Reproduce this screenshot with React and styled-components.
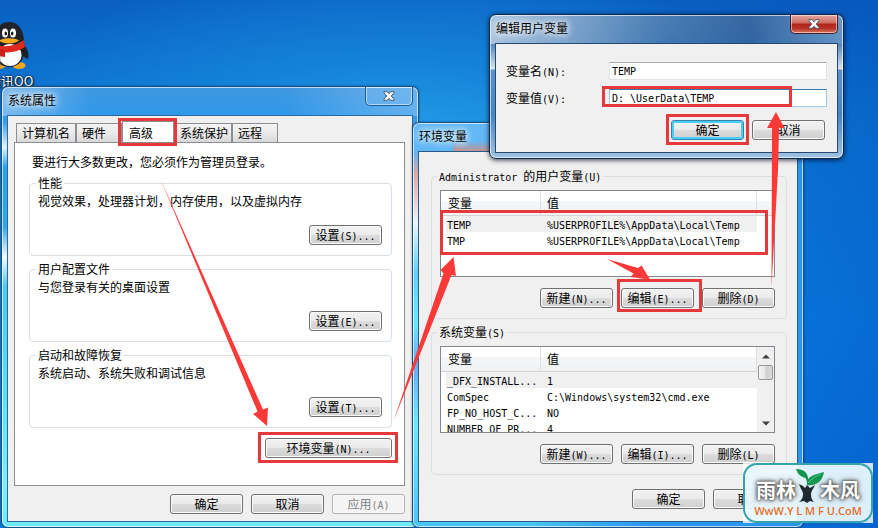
import React, { useState } from "react";
import styled, { createGlobalStyle } from "styled-components";

const GlobalStyle = createGlobalStyle`
  body {
    margin: 0;
    font-family: "Noto Sans CJK SC", sans-serif;
    font-size: 12px;
    line-height: 16px;
    color: #000;
  }
  * {
    box-sizing: border-box;
  }
`

const RED = "#e6393b";

//////////////////////////////desktop
const Desktop = styled.main`
  position: relative;
  min-height: 100vh;
  overflow: hidden;
  background:
    radial-gradient(ellipse 420px 220px at 400px 170px, #2aa4ea 0%, rgba(26, 143, 224, 0.6) 50%, rgba(26, 143, 224, 0) 100%),
    linear-gradient(100deg, rgba(0, 0, 0, 0) 60%, rgba(0, 70, 180, 0.45) 100%),
    linear-gradient(180deg, #0a60c2 0%, #0d7ad6 22%, #0a86ea 60%, #0a7ce4 100%);
`
const DesktopIcon = styled.div`
  position: absolute;
  left: -12px;
  top: 20px;
  display: flex;
  flex-direction: column;
  align-items: center;
`
const IconLabel = styled.span`
  font-size: 13px;
  line-height: 22px;
  color: #fff;
  text-shadow: 1px 1px 2px #000, 0 0 2px #000;
  white-space: nowrap;
`

//////////////////////////////window frame
const Frame = styled.section`
  position: absolute;
  left: ${(p) => p.$x}px;
  top: ${(p) => p.$y}px;
  width: ${(p) => p.$w}px;
  padding: 0 5px 5px;
  border: 1px solid ${(p) => p.$edge};
  border-radius: 7px;
  box-shadow: inset 0 0 0 1px rgba(255, 255, 255, 0.65), ${(p) => p.$shadow || "0 0 2px rgba(0, 20, 60, 0.6)"};
  background: ${(p) => p.$glass};
`
const TitleBar = styled.header`
  display: flex;
  justify-content: space-between;
  height: 28px;
`
const Title = styled.h1`
  margin: 4px 0 0 1px;
  font-size: 12px;
  font-weight: 400;
  line-height: 18px;
  text-shadow: 0 0 6px #fff, 0 0 8px rgba(255, 255, 255, 0.8), 0 0 10px rgba(255, 255, 255, 0.6);
`
const CloseButton = styled.button`
  display: flex;
  justify-content: center;
  align-items: center;
  width: 48px;
  height: 19px;
  padding: 0;
  border: 1px solid ${(p) => (p.$active ? "#4a1c2c" : "#1d5c98")};
  border-top: none;
  border-radius: 0 0 5px 5px;
  box-shadow: inset 0 0 0 1px rgba(255, 255, 255, 0.5);
  background: ${(p) =>
    p.$active
      ? "linear-gradient(180deg, #e2a79f 0%, #cc6b60 45%, #b02418 50%, #b93428 75%, #d9775c 100%)"
      : "rgba(120, 190, 245, 0.35)"};
`
const Body = styled.div`
  display: flex;
  flex-direction: column;
  border: 1px solid ${(p) => p.$edge};
  padding: ${(p) => p.$pad};
  background: #f0f0f0;
`

//////////////////////////////controls
// the half-width letters sit on a 6px grid next to 12px characters
const Mono = styled.span`
  font-family: "DejaVu Sans Mono", monospace;
  font-size: 10px;
  line-height: 10px;
  white-space: pre;
`
const Push = styled.button`
  min-width: ${(p) => (p.$wide ? 127 : 73)}px;
  height: 20px;
  padding: 0 4px;
  border: 1px solid #707070;
  border-radius: 3px;
  box-shadow: inset 0 0 0 1px #fafafa;
  background: linear-gradient(180deg, #f2f2f2 0%, #ebebeb 48%, #dcdcdc 52%, #cfcfcf 100%);
  color: #000;
  font-family: inherit;
  font-size: 12px;
  line-height: 16px;
  white-space: nowrap;

  &:disabled {
    border-color: #adb2b5;
    background: #f4f4f4;
    color: #838383;
  }
`
const DefaultPush = styled(Push)`
  border-color: #3c7fb1;
  box-shadow: inset 0 0 0 2px #48d0f4;
`
const ButtonRow = styled.div`
  display: flex;
  justify-content: flex-end;
  gap: 8px;
  margin-top: ${(p) => p.$top || 0}px;
  margin-right: ${(p) => p.$right || 0}px;
`
const Group = styled.fieldset`
  min-width: 0;
  margin: 0;
  padding: ${(p) => p.$pad};
  border: 1px solid #d5dfe5;
  border-radius: 4px;
`
const Legend = styled.legend`
  height: 16px;
  margin-left: ${(p) => p.$indent || 0}px;
  padding: 0 2px;
  line-height: 16px;
`
const Line = styled.p`
  margin: 0;
  padding-left: ${(p) => p.$indent || 0}px;
`

//////////////////////////////tabs
const TabRow = styled.div`
  display: flex;
  align-items: flex-end;
  height: 20px;
  padding-left: 2px;
`
const Tab = styled.button`
  width: ${(p) => p.$w}px;
  height: ${(p) => (p.$on ? 22 : 19)}px;
  margin-bottom: ${(p) => (p.$on ? -1 : 0)}px;
  padding: 0 0 0 ${(p) => (p.$on ? 6 : 5)}px;
  border: 1px solid #8c8e94;
  border-bottom: none;
  background: ${(p) => (p.$on ? "#fff" : "linear-gradient(180deg, #f3f3f3 0%, #ebebeb 50%, #d8d8d8 100%)")};
  font-family: inherit;
  font-size: 12px;
  line-height: 16px;
  text-align: left;
  white-space: nowrap;
`
const TabPanel = styled.div`
  display: flex;
  flex-direction: column;
  gap: 5px;
  padding: 11px 12px 27px 14px;
  border: 1px solid #8c8e94;
  background: #fff;
`

//////////////////////////////variable list
const List = styled.div`
  display: flex;
  height: 87px;
  overflow: hidden;
  border: 1px solid #828790;
  background: #fff;
`
const Table = styled.table`
  flex: 1;
  align-self: flex-start;
  table-layout: fixed;
  border-spacing: 0;
  font-size: 12px;
  line-height: 16px;
`
const HeadCell = styled.th`
  width: ${(p) => (p.$w ? p.$w + "px" : "auto")};
  height: 25px;
  padding: 0 0 0 ${(p) => (p.$w ? 7 : 6)}px;
  border-right: 1px solid #dedfe1;
  border-bottom: 1px solid #d5d5d5;
  background: linear-gradient(180deg, #fff 40%, #f5f6f7 42%, #f1f2f4 100%);
  font-weight: 400;
  text-align: left;
`
const Row = styled.tr`
  background: ${(p) => (p.$shaded ? "#f0f0f0" : "#fff")};
`
const Cell = styled.td`
  height: 16px;
  padding: 0 0 0 6px;
  line-height: 16px;
  white-space: nowrap;

  &:first-child {
    padding-left: 1px;
    border-left: 5px solid #fff;
  }
`
const HeadRest = styled.div`
  width: 17px;
  height: 25px;
  border-bottom: 1px solid #d5d5d5;
  background: linear-gradient(180deg, #fff 40%, #f5f6f7 42%, #f1f2f4 100%);
`
const ScrollBar = styled.div`
  display: flex;
  flex-direction: column;
  align-items: center;
  width: 17px;
  background: #f0f0f0;
`
const ScrollButton = styled.button`
  display: flex;
  justify-content: center;
  align-items: center;
  width: 17px;
  height: 18px;
  padding: 0;
  border: none;
  background: transparent;
`
const Thumb = styled.div`
  width: 15px;
  height: 15px;
  margin-bottom: auto;
  border: 1px solid #979797;
  border-radius: 2px;
  background: linear-gradient(90deg, #f5f5f5 0%, #e6e6e6 48%, #cfcfcf 52%, #dcdcdc 100%);
`

//////////////////////////////edit form
const Form = styled.form`
  display: flex;
  flex-direction: column;
  gap: 9px;
  margin: 0;
`
const Field = styled.div`
  display: flex;
  align-items: center;
  height: 18px;
`
const Label = styled.label`
  width: 103px;
`
const Input = styled.input`
  flex: 1;
  min-width: 0;
  height: 18px;
  padding: 0 2px;
  border: 1px solid ${(p) => (p.$focused ? "#a4c9e3" : "#dfe2e8")};
  border-top-color: ${(p) => (p.$focused ? "#3d7bad" : "#abadb3")};
  outline: none;
  background: #fff;
  font-family: "DejaVu Sans Mono", monospace;
  font-size: 10px;
`

//////////////////////////////marks over the windows
const Marks = styled.svg`
  position: absolute;
  left: 0;
  top: 0;
  pointer-events: none;
`
const Badge = styled.aside`
  position: absolute;
  left: 743px;
  top: 463px;
  width: 130px;
  height: 60px;
  background: rgba(255, 255, 255, 0.8);
`
const BadgeInner = styled.div`
  display: flex;
  flex-direction: column;
  align-items: center;
  height: 60px;
  padding-top: 2px;
  border: 2px solid #35a3ae;
  border-radius: 14px;
  background: rgba(226, 245, 252, 0.7);
`
const BadgeName = styled.div`
  display: flex;
  align-items: flex-end;
  height: 36px;
  font-size: 20px;
  font-weight: 700;
  line-height: 26px;
  color: #fff;
  text-shadow: 0 0 2px #555, 0 0 3px #666, 0 0 4px #666, 0 0 6px #777;
`
const BadgeUrl = styled.a`
  font-family: "Open Sans", sans-serif;
  font-size: 11px;
  font-weight: 600;
  line-height: 16px;
  color: #e8702a;
  text-decoration: none;
  white-space: nowrap;
`

const Text = ({ children }) =>
  children
    .split(/([\x20-\x7e]+)/)
    .filter(Boolean)
    .map((part, i) => (/^[\x20-\x7e]/.test(part) ? <Mono key={i}>{part}</Mono> : part))

const CloseX = () => (
  <svg width="12" height="10" viewBox="0 0 12 10">
    <path
      d="M1 .7h3.2L6 2.7 7.8.7H11v1L8.2 5 11 8.3v1H7.8L6 7.3l-1.8 2H1v-1L3.8 5 1 1.7z"
      fill="#fff"
      stroke="#4c5c6c"
      strokeWidth="1"
    />
  </svg>
)

const Penguin = () => (
  <svg width="36" height="50" viewBox="-4 20 36 50">
    <ellipse cx="2" cy="65" rx="7" ry="4" fill="#f5a81c" />
    <ellipse cx="22" cy="65.500" rx="6.500" ry="3.500" fill="#f5a81c" />
    <path d="M25 42c4 4 7 10 6.500 16-2 2-5-2-6-4z" fill="#1c2026" />
    <ellipse cx="12" cy="53" rx="15" ry="14" fill="#1c2026" />
    <ellipse cx="13" cy="55" rx="11.500" ry="11" fill="#fbfbfb" />
    <path d="M-3 42c0-13 6-20 15-20s15 7 15 20z" fill="#20242a" />
    <path d="M-4 43c8 5 22 4 31-3l1 7c-8 6-20 7-32 3z" fill="#dd2a1e" />
    <path d="M2 49l6 1v7l-6-1z" fill="#c91f17" />
    <ellipse cx="8" cy="33" rx="3" ry="4.500" fill="#fff" />
    <ellipse cx="16" cy="33" rx="3" ry="4.500" fill="#fff" />
    <ellipse cx="8.800" cy="33.500" rx="1.200" ry="2" fill="#111" />
    <ellipse cx="15.200" cy="33.500" rx="1.200" ry="2" fill="#111" />
    <path d="M2 40.500c4-3 16-3 20 0-4 4-16 4-20 0z" fill="#f5a81c" />
    <path d="M-6 55h9v14h-9z" fill="#fff" stroke="#888" strokeWidth=".6" />
    <path d="M-6 58h7v6h-7z" fill="#27589c" />
  </svg>
)

const Sprout = () => (
  <svg width="24" height="35" viewBox="0 0 24 35" overflow="visible">
    <path d="M3 16l4 2 2 2 2-3 3 3 5-3c-1 3-4 6-4 9 0 4 1 6 3 8l-4-1-3 2-3-2-5 1c3-2 4-5 4-8s-3-6-4-10z" fill="#1f2a30" />
    <path d="M12 17c0-4 0-6-3-9" stroke="#128a4c" strokeWidth="2" fill="none" />
    <path d="M0 1c6 0 11 2 12 9-6 0-10-3-12-9z" fill="#12964e" />
    <path d="M11 17c-1-9 7-10 17-13-2 11-9 14-17 13z" fill="#12964e" />
    <path d="M12 15c3-4 8-7 13-9" stroke="#7cc98c" strokeWidth=".8" fill="none" />
  </svg>
)

const VariableList = ({ rows, scroll }) => (
  <List>
    <Table>
      <thead>
        <tr>
          <HeadCell $w={100}>变量</HeadCell>
          <HeadCell>值</HeadCell>
        </tr>
      </thead>
      <tbody>
        {rows.map(([name, value], i) => (
          <Row key={name} $shaded={i === 0}>
            <Cell><Text>{name}</Text></Cell>
            <Cell><Text>{value}</Text></Cell>
          </Row>
        ))}
      </tbody>
    </Table>
    {scroll ? (
      <ScrollBar>
        <ScrollButton type="button" aria-label="向上">
          <svg width="8" height="5"><path d="M0 4.500L4 .5l4 4z" fill="#404040" /></svg>
        </ScrollButton>
        <Thumb />
        <ScrollButton type="button" aria-label="向下">
          <svg width="8" height="5"><path d="M0 .5h8l-4 4z" fill="#404040" /></svg>
        </ScrollButton>
      </ScrollBar>
    ) : (
      <HeadRest />
    )}
  </List>
)

const tabs = [
  { name: "计算机名", w: 60 },
  { name: "硬件", w: 46 },
  { name: "高级", w: 52 },
  { name: "系统保护", w: 58 },
  { name: "远程", w: 46 },
]

const sections = [
  { title: "性能", text: "视觉效果，处理器计划，内存使用，以及虚拟内存", button: "设置(S)..." },
  { title: "用户配置文件", text: "与您登录有关的桌面设置", button: "设置(E)..." },
  { title: "启动和故障恢复", text: "系统启动、系统失败和调试信息", button: "设置(T)..." },
]

const variableGroups = [
  {
    title: "Administrator 的用户变量(U)",
    rows: [
      ["TEMP", "%USERPROFILE%\\AppData\\Local\\Temp"],
      ["TMP", "%USERPROFILE%\\AppData\\Local\\Temp"],
    ],
    buttons: ["新建(N)...", "编辑(E)...", "删除(D)"],
  },
  {
    title: "系统变量(S)",
    scroll: true,
    rows: [
      ["_DFX_INSTALL...", "1"],
      ["ComSpec", "C:\\Windows\\system32\\cmd.exe"],
      ["FP_NO_HOST_C...", "NO"],
      ["NUMBER_OF_PR...", "4"],
    ],
    buttons: ["新建(W)...", "编辑(I)...", "删除(L)"],
  },
]

const propertiesGlass = `
  linear-gradient(90deg, rgba(255, 255, 255, 0.35) 0, rgba(255, 255, 255, 0) 90px, rgba(255, 255, 255, 0) 280px, rgba(255, 255, 255, 0.25) 100%) 0 0 / 100% 29px no-repeat,
  linear-gradient(180deg, #3f97e0 0, #2f98ea 28px, #3f9fe8 36px, #e4f2fc 60px, #2c9ff0 80px, #35a5ee 140px, #f4fbff 170px, #4fc6ee 200px, #55d6f5 270px, #7df0fb 400px, #6ceafc 100%)
`
const variablesGlass = `
  linear-gradient(180deg, rgba(240, 130, 100, 0) 18px, rgba(240, 130, 100, 0.75) 29px) 40px 0 / 100px 29px no-repeat,
  linear-gradient(90deg, #62b8f6, #62b8f6) 0 0 / 100% 28px no-repeat,
  linear-gradient(90deg, rgba(42, 150, 240, 0) 30%, #2a96f0 60%),
  linear-gradient(180deg, #7ec2f5 0, #62b4f2 28px, #d8a8a8 50px, #f0f4fa 100px, #5fd0f5 150px, #6aeafc 200px, #6aa8ee 240px, #6ceafc 300px, #48c4fa 100%)
`
const editGlass = `
  linear-gradient(90deg, rgba(220, 232, 245, 0.65) 0, rgba(190, 210, 232, 0.45) 70px, rgba(30, 90, 160, 0.2) 170px, rgba(20, 70, 140, 0.5) 260px, rgba(150, 190, 225, 0.3) 100%) 0 0 / 100% 29px no-repeat,
  linear-gradient(180deg, #5788ba 0, #4d82b8 28px, #d8e6f2 54px, #5a92c8 55px, #4785c2 100px, #9fc2e2 100%)
`

const boxes = [
  [118, 118, 59, 28],
  [258, 432, 140, 31],
  [440, 210, 328, 45],
  [617, 279, 85, 33],
  [602, 86, 190, 21],
  [666, 114, 83, 31],
]

export default function App() {
  const [tab, setTab] = useState("高级")
  const [name, setName] = useState("TEMP")
  const [value, setValue] = useState("D: \\UserData\\TEMP")

  return (
    <Desktop>
      <GlobalStyle />

      <DesktopIcon>
        <Penguin />
        <IconLabel>腾讯QQ</IconLabel>
      </DesktopIcon>

      {/* system properties */}
      <Frame $x={1} $y={86} $w={418} $edge="#1b4f80" $glass={propertiesGlass}>
        <TitleBar>
          <Title>系统属性</Title>
          <CloseButton type="button" aria-label="关闭"><CloseX /></CloseButton>
        </TitleBar>
        <Body $edge="#2a6a9c" $pad="6px 7px 7px 6px">
          <TabRow role="tablist">
            {tabs.map((t) => (
              <Tab
                key={t.name}
                type="button"
                role="tab"
                aria-selected={tab === t.name}
                $w={t.w}
                $on={tab === t.name}
                onClick={() => setTab(t.name)}
              >
                {t.name}
              </Tab>
            ))}
          </TabRow>
          <TabPanel role="tabpanel">
            <Line $indent={3}>要进行大多数更改，您必须作为管理员登录。</Line>
            {sections.map((s) => (
              <Group key={s.title} $pad="2px 9px 10px 8px">
                <Legend $indent={-2}>{s.title}</Legend>
                <Line>{s.text}</Line>
                <ButtonRow $top={16}>
                  <Push type="button"><Text>{s.button}</Text></Push>
                </ButtonRow>
              </Group>
            ))}
            <ButtonRow $top={5}>
              <Push type="button" $wide><Text>环境变量(N)...</Text></Push>
            </ButtonRow>
          </TabPanel>
          <ButtonRow $top={8}>
            <Push type="button">确定</Push>
            <Push type="button">取消</Push>
            <Push type="button" disabled><Text>应用(A)</Text></Push>
          </ButtonRow>
        </Body>
      </Frame>

      {/* environment variables */}
      <Frame $x={412} $y={122} $w={392} $edge="#1b4f80" $glass={variablesGlass}>
        <TitleBar>
          <Title>环境变量</Title>
        </TitleBar>
        <Body $edge="#2a5a88" $pad="16px 10px 12px 12px">
          {variableGroups.map((g, i) => (
            <React.Fragment key={g.title}>
              {i > 0 && <Spacer />}
              <Group $pad="6px 11px 10px 8px">
                <Legend $indent={-3}><Text>{g.title}</Text></Legend>
                <VariableList rows={g.rows} scroll={g.scroll} />
                <ButtonRow $top={11}>
                  {g.buttons.map((b) => (
                    <Push key={b} type="button"><Text>{b}</Text></Push>
                  ))}
                </ButtonRow>
              </Group>
            </React.Fragment>
          ))}
          <ButtonRow $top={14} $right={1}>
            <Push type="button">确定</Push>
            <Push type="button">取消</Push>
          </ButtonRow>
        </Body>
      </Frame>

      {/* edit user variable */}
      <Frame $x={489} $y={14} $w={355} $edge="#10294a" $glass={editGlass} $shadow="0 1px 5px rgba(0, 10, 40, 0.8)">
        <TitleBar>
          <Title>编辑用户变量</Title>
          <CloseButton type="button" aria-label="关闭" $active><CloseX /></CloseButton>
        </TitleBar>
        <Body $edge="#24486e" $pad="18px 10px 12px 10px">
          <Form onSubmit={(e) => e.preventDefault()}>
            <Field>
              <Label htmlFor="varName"><Text>变量名(N):</Text></Label>
              <Input id="varName" value={name} onChange={(e) => setName(e.target.value)} />
            </Field>
            <Field>
              <Label htmlFor="varValue"><Text>变量值(V):</Text></Label>
              <Input id="varValue" $focused value={value} onChange={(e) => setValue(e.target.value)} />
            </Field>
            <ButtonRow $top={4} $right={2}>
              <DefaultPush type="submit">确定</DefaultPush>
              <Push type="button">取消</Push>
            </ButtonRow>
          </Form>
        </Body>
      </Frame>

      <Marks width="878" height="528" viewBox="0 0 878 528" aria-hidden="true">
        {boxes.map(([x, y, w, h]) => (
          <rect key={x} x={x + 1.5} y={y + 1.5} width={w - 3} height={h - 3} fill="none" stroke={RED} strokeWidth="3" />
        ))}
        <g fill="#fb3a38">
          <path d="M160 178L263 409.500 268 407.500 267 426 253 414 257.500 411.500z" />
          <path d="M393.500 421L443.500 273.500 440.500 270 453.500 257 456 276 451.500 275z" />
          <path d="M607 259L638 268 641.500 265.500 650 279.500 630.500 277 633.500 273.500z" />
          <path d="M771.500 287L772 128 767 128 776 112 784.500 128 779 128 778 170z" />
        </g>
      </Marks>

      <Badge>
        <BadgeInner>
          <BadgeName>雨林<Sprout />木风</BadgeName>
          <BadgeUrl href="#">WwW.Y L M F U.CoM</BadgeUrl>
        </BadgeInner>
      </Badge>
    </Desktop>
  )
}

const Spacer = styled.div`
  height: 5px;
`
